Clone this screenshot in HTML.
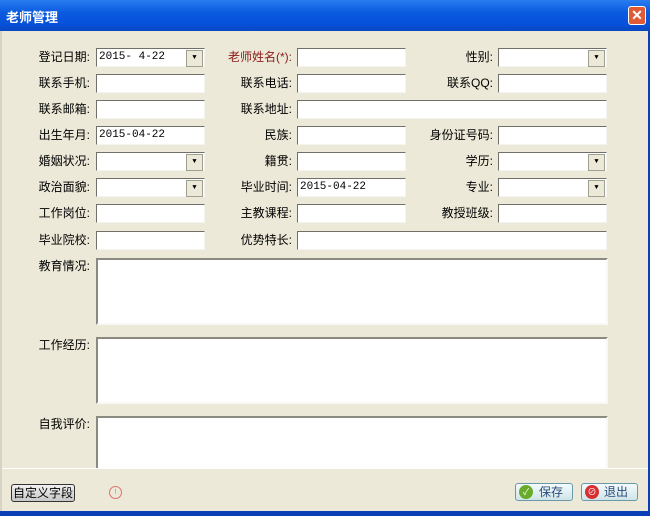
<!DOCTYPE html>
<html><head><meta charset="utf-8"><style>
*{margin:0;padding:0;box-sizing:border-box}
body{width:650px;height:516px;overflow:hidden;background:#0a3fb8;font-family:"Liberation Sans","Noto Sans CJK SC",sans-serif;font-size:12px;color:#000;position:relative}
.title{position:absolute;left:0;top:0;width:650px;height:31px;background:linear-gradient(#2a7cf0,#0a5be0 40%,#0650d8 80%,#0a48c0);}
.title span{position:absolute;left:6px;top:7px;color:#fff;font-weight:bold;font-size:13px;}
.close{position:absolute;left:628px;top:6px;width:18px;height:19px;background:#e05a36;border:1px solid #fff;border-radius:3px;color:#fff;font-weight:bold;font-size:14px;text-align:center;line-height:17px}
.win{position:absolute;left:0;top:31px;width:648px;height:480px;background:#ece9d8;border-left:2px solid #d8d4c4}
.l{position:absolute;text-align:right;white-space:nowrap;height:19px;line-height:19px}
.i{position:absolute;height:19px;background:#fff;border:1px solid #7f9db9;border-top-color:#707068;border-left-color:#707068;border-right-color:#f4f4f0;border-bottom-color:#f4f4f0;padding-left:2px;line-height:17px;font-family:"Liberation Mono","Noto Sans CJK SC",monospace;font-size:11px}
.dd::after{content:"▼";position:absolute;right:1px;top:1px;width:15px;height:15px;background:#ece9d8;border:1px solid #a0a090;font-size:7px;line-height:14px;text-align:center;color:#000}
.ta{position:absolute;left:96px;width:512px;background:#fff;border:2px solid #8a8a80;border-right-color:#f8f8f4;border-bottom-color:#f8f8f4}
.btn{position:absolute;height:18px;border:1px solid #6a9aaa;border-radius:3px;background:linear-gradient(#f4fbfc,#cfe4e8);line-height:16px;font-size:12px}
</style></head><body>
<div class="title"><span>老师管理</span></div>
<div class="close">✕</div>
<div class="win"></div>
<div style="position:absolute;left:2px;top:468px;width:646px;height:1px;background:#fff"></div>

<div class="l" style="right:560px;top:48px">登记日期:</div>
<div class="i dd" style="left:96px;top:48px;width:109px">2015- 4-22</div>
<div class="l" style="right:358px;top:48px;color:#8b1a1a">老师姓名(*):</div>
<div class="i" style="left:297px;top:48px;width:109px"></div>
<div class="l" style="right:157px;top:48px">性别:</div>
<div class="i dd" style="left:498px;top:48px;width:109px"></div>

<div class="l" style="right:560px;top:74px">联系手机:</div>
<div class="i" style="left:96px;top:74px;width:109px"></div>
<div class="l" style="right:358px;top:74px">联系电话:</div>
<div class="i" style="left:297px;top:74px;width:109px"></div>
<div class="l" style="right:157px;top:74px">联系QQ:</div>
<div class="i" style="left:498px;top:74px;width:109px"></div>

<div class="l" style="right:560px;top:100px">联系邮箱:</div>
<div class="i" style="left:96px;top:100px;width:109px"></div>
<div class="l" style="right:358px;top:100px">联系地址:</div>
<div class="i" style="left:297px;top:100px;width:310px"></div>

<div class="l" style="right:560px;top:126px">出生年月:</div>
<div class="i" style="left:96px;top:126px;width:109px">2015-04-22</div>
<div class="l" style="right:358px;top:126px">民族:</div>
<div class="i" style="left:297px;top:126px;width:109px"></div>
<div class="l" style="right:157px;top:126px">身份证号码:</div>
<div class="i" style="left:498px;top:126px;width:109px"></div>

<div class="l" style="right:560px;top:152px">婚姻状况:</div>
<div class="i dd" style="left:96px;top:152px;width:109px"></div>
<div class="l" style="right:358px;top:152px">籍贯:</div>
<div class="i" style="left:297px;top:152px;width:109px"></div>
<div class="l" style="right:157px;top:152px">学历:</div>
<div class="i dd" style="left:498px;top:152px;width:109px"></div>

<div class="l" style="right:560px;top:178px">政治面貌:</div>
<div class="i dd" style="left:96px;top:178px;width:109px"></div>
<div class="l" style="right:358px;top:178px">毕业时间:</div>
<div class="i" style="left:297px;top:178px;width:109px">2015-04-22</div>
<div class="l" style="right:157px;top:178px">专业:</div>
<div class="i dd" style="left:498px;top:178px;width:109px"></div>

<div class="l" style="right:560px;top:204px">工作岗位:</div>
<div class="i" style="left:96px;top:204px;width:109px"></div>
<div class="l" style="right:358px;top:204px">主教课程:</div>
<div class="i" style="left:297px;top:204px;width:109px"></div>
<div class="l" style="right:157px;top:204px">教授班级:</div>
<div class="i" style="left:498px;top:204px;width:109px"></div>

<div class="l" style="right:560px;top:231px">毕业院校:</div>
<div class="i" style="left:96px;top:231px;width:109px"></div>
<div class="l" style="right:358px;top:231px">优势特长:</div>
<div class="i" style="left:297px;top:231px;width:310px"></div>

<div class="l" style="right:560px;top:257px">教育情况:</div>
<div class="ta" style="top:258px;height:67px"></div>
<div class="l" style="right:560px;top:336px">工作经历:</div>
<div class="ta" style="top:337px;height:67px"></div>
<div class="l" style="right:560px;top:415px">自我评价:</div>
<div class="ta" style="top:416px;height:52px;border-bottom:none"></div>

<div class="btn" style="left:11px;top:484px;width:64px;background:linear-gradient(#f0f0f0,#c8c8c8);border-color:#333;text-align:center">自定义字段</div>
<div style="position:absolute;left:109px;top:486px;width:13px;height:13px;border:1px solid #e07070;border-radius:50%;color:#e07070;font-size:7px;text-align:center;line-height:11px">!</div>
<div class="btn" style="left:515px;top:483px;width:58px"><span style="position:absolute;left:3px;top:1px;width:14px;height:14px;border-radius:50%;background:#6aaa2a;color:#fff;font-size:9px;text-align:center;line-height:14px">✓</span><span style="position:absolute;left:23px;color:#2a4a7a">保存</span></div>
<div class="btn" style="left:581px;top:483px;width:57px"><span style="position:absolute;left:3px;top:1px;width:14px;height:14px;border-radius:50%;background:#d83030;color:#fff;font-size:9px;text-align:center;line-height:14px">⊘</span><span style="position:absolute;left:22px;color:#2a4a7a">退出</span></div>
</body></html>
